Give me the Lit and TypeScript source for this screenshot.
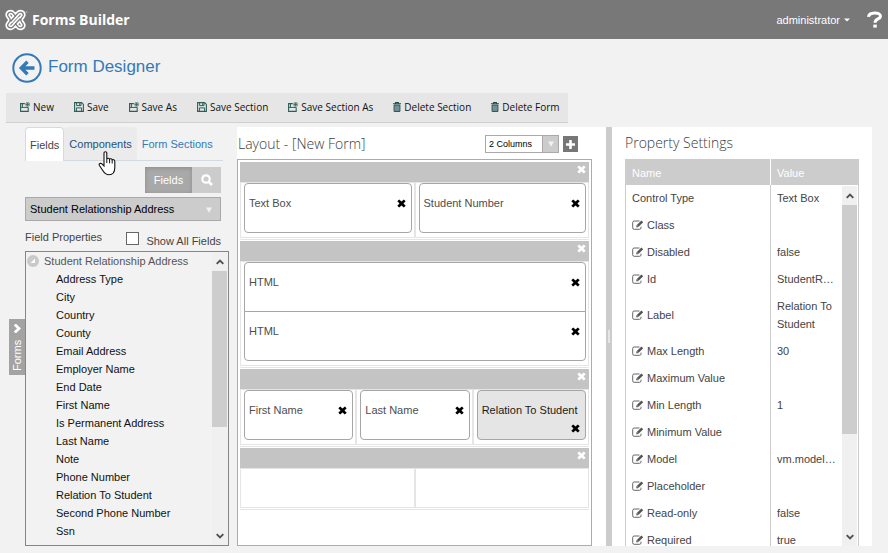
import { LitElement, html, css, nothing } from "lit";
import { customElement, property, state } from "lit/decorators.js";
import { classMap } from "lit/directives/class-map.js";

const FIELDS = [
  "Address Type", "City", "Country", "County", "Email Address", "Employer Name", "End Date",
  "First Name", "Is Permanent Address", "Last Name", "Note", "Phone Number",
  "Relation To Student", "Second Phone Number", "Ssn",
];

const ACTIONS: [string, string][] = [
  ["New", "add"], ["Save", "save"], ["Save As", "add"], ["Save Section", "save"],
  ["Save Section As", "add"], ["Delete Section", "trash"], ["Delete Form", "trash"],
];

interface Prop { name: string; value: string; fixed?: boolean }
const PROPS: Prop[] = [
  { name: "Control Type", value: "Text Box", fixed: true },
  { name: "Class", value: "" },
  { name: "Disabled", value: "false" },
  { name: "Id", value: "StudentR…" },
  { name: "Label", value: "Relation To Student" },
  { name: "Max Length", value: "30" },
  { name: "Maximum Value", value: "" },
  { name: "Min Length", value: "1" },
  { name: "Minimum Value", value: "" },
  { name: "Model", value: "vm.model…" },
  { name: "Placeholder", value: "" },
  { name: "Read-only", value: "false" },
  { name: "Required", value: "true" },
];

/* Each section is a list of cells; each cell a stack of controls. */
const SECTIONS: string[][][] = [
  [["Text Box"], ["Student Number"]],
  [["HTML", "HTML"]],
  [["First Name"], ["Last Name"], ["Relation To Student"]],
  [[], []],
];

const LOGO = "M10.5 7.2 8.2 4.4C6.2 2 2.4 3.200 2.700 6.200 2.900 8 5.200 8.600 5.200 11 5.200 13.400 2.900 14 2.700 15.800 2.400 18.800 6.200 20 8.200 17.600L15 10M10.500 14.800 12.800 17.600C14.800 20 18.600 18.800 18.300 15.800 18.100 14 15.800 13.400 15.800 11 15.800 8.600 18.100 8 18.300 6.200 18.600 3.200 14.800 2 12.800 4.400L6 12";

const cross = html`<svg class="cross" viewBox="0 0 9 9" width="9" height="9" aria-hidden="true">
  <path d="M2.2 0.4 4.5 2.5 6.8 0.4 8.7 2.3 6.5 4.5 8.7 6.7 6.8 8.6 4.5 6.5 2.2 8.6 0.3 6.7 2.5 4.5 0.3 2.3Z" fill="currentColor"/></svg>`;

const down = html`<svg viewBox="0 0 6 6" width="6" height="6" aria-hidden="true"><path d="M0 0.5H6L3 5.8Z" fill="currentColor"/></svg>`;

const edit = html`<svg class="edit" viewBox="0 0 12 10" width="12" height="10" aria-hidden="true">
  <path d="M7.500 1H2.200A1.500 1.500 0 0 0 .7 2.500V7.800A1.500 1.500 0 0 0 2.200 9.300H7.500A1.500 1.500 0 0 0 9 7.800V6.600" fill="none" stroke="#666" stroke-width="1"/>
  <path d="M4.300 7.200V5.400L9.400 .4 11.200 2.200 6.100 7.200Z" fill="#555"/><path d="M5 5.400 6.200 6.600" stroke="#fff" stroke-width=".7"/></svg>`;

const actionIcon = (kind: string) => kind === "trash"
  ? html`<svg viewBox="0 0 8 10" width="8" height="10" aria-hidden="true">
      <path d="M0 1.8H8M2.6 1.4V.5H5.4V1.4" fill="none" stroke="#1d4d47" stroke-width="1.1"/>
      <path d="M1.1 3.1H6.9V9.4H1.1Z" fill="#9aa9ad" stroke="#1d4d47"/><path d="M3 3.5V9M5 3.5V9" stroke="#3a6a78" stroke-width=".8"/></svg>`
  : kind === "save"
  ? html`<svg viewBox="0 0 10 10" width="10" height="10" aria-hidden="true">
      <path d="M.6 .6H7.6L9.4 2.4V9.4H.6Z" fill="none" stroke="#2c5f58" stroke-width="1.1"/>
      <path d="M2.6 .8V3.6H7V.8M2.4 9.2V5.9H7.6V9.2" fill="none" stroke="#2c5f58"/><path d="M5.7 1.2V3" stroke="#2c5f58"/></svg>`
  : html`<svg viewBox="0 0 10 10" width="10" height="10" aria-hidden="true">
      <path d="M4.8 1.6H.6V9.4H8.2V5.6" fill="none" stroke="#2c5f58" stroke-width="1.1"/>
      <path d="M.6 5.4H8.2M2.4 1.8V5" fill="none" stroke="#2c5f58"/>
      <circle cx="7.6" cy="2.4" r="2.1" fill="#a9c0b4" stroke="#5c7f74" stroke-width=".6"/>
      <path d="M7.6 .8V4M6 2.4H9.2" stroke="#2c5f58" stroke-width=".8"/></svg>`;

@customElement("scroll-track")
class ScrollTrack extends LitElement {
  @property({ type: Number }) span = 50;
  static styles = css`
    :host { display: flex; flex-direction: column; width: 15px; background: #f0f0f0; color: #505050; }
    .end { height: 19px; display: grid; place-items: center; flex: none; }
    .rail { flex: 1; display: flex; flex-direction: column; }
    .thumb { background: #cdcdcd; }
  `;
  render() {
    return html`
      <div class="end"><svg width="8" height="6" viewBox="0 0 8 6"><path d="M.7 4.8 4 1.5 7.3 4.8" fill="none" stroke="currentColor" stroke-width="1.9"/></svg></div>
      <div class="rail"><div class="thumb" style="height:${this.span}%"></div></div>
      <div class="end"><svg width="8" height="6" viewBox="0 0 8 6"><path d="M.7 1.2 4 4.5 7.3 1.2" fill="none" stroke="currentColor" stroke-width="1.9"/></svg></div>`;
  }
}

@customElement("form-section")
class FormSection extends LitElement {
  @property({ attribute: false }) cells: string[][] = [];
  @property() selected = "";
  static styles = css`
    :host { display: block; border-bottom: 1px solid #e5e5e5; padding-bottom: 1px; margin-bottom: 1px; }
    button { border: 0; padding: 0; background: none; display: block; line-height: 0; cursor: pointer; color: inherit; }
    .bar { height: 20px; background: #c4c4c4; color: #fff; display: flex; justify-content: flex-end; align-items: flex-start; padding: 3px 3px 0 0; box-sizing: border-box; }
    .row { display: flex; }
    .cell { flex: 1 1 0; min-width: 0; border: 1px solid #e5e5e5; padding: 0 2px 4px 3px; min-height: 34px; }
    .control { height: 50px; box-sizing: border-box; border: 1px solid #a6a6a6; border-radius: 4px; padding: 11px 5px 4px 4px;
      display: flex; flex-wrap: wrap; row-gap: 6px; justify-content: space-between; align-content: flex-start; align-items: center; line-height: 16px; color: #4d4d4d; background: #fff; }
    .control + .control { margin-top: -1px; border-radius: 0 0 4px 4px; }
    .stacked { border-radius: 4px 4px 0 0; }
    .control button { color: #000; }
    .control.selected { background: #e5e5e5; color: #1a1a1a; }
    .selected button { margin-left: auto; }
    .selected span { flex: 0 0 100%; white-space: nowrap; }
  `;
  render() {
    return html`
      <div class="bar"><button aria-label="Remove section">${cross}</button></div>
      <div class="row">${this.cells.map((stack) => html`
        <div class="cell">${stack.map((label, i) => html`
          <div class=${classMap({ control: true, stacked: stack.length > 1 && i === 0, selected: label === this.selected })}>
            <span>${label}</span><button aria-label="Remove ${label}">${cross}</button>
          </div>`)}</div>`)}
      </div>`;
  }
}

@customElement("app-root")
class AppRoot extends LitElement {
  @state() private tab = "Fields";

  static styles = css`
    :host { display: flex; flex-direction: column; height: 100vh; box-sizing: border-box; overflow: hidden; background: #f2f2f2;
      font-family: "Liberation Sans", Arial, sans-serif; font-size: 11px; color: #444; }
    button, select, input { font: inherit; margin: 0; }
    button { border: 0; padding: 0; background: none; color: inherit; cursor: pointer; }
    h1, h2 { margin: 0; font-weight: 400; }
    svg { display: block; flex: none; }
    a { text-decoration: none; color: inherit; }

    header { height: 39px; flex: none; background: #787878; color: #fff; display: flex; align-items: center; padding: 0 4px 0 5px; gap: 4px; }
    .brand { font: 700 14px/20px "Open Sans", sans-serif; flex: 1; }
    .user { display: flex; align-items: center; gap: 4px; margin-right: 12px; }
    .title { display: flex; align-items: center; gap: 6px; padding: 14px 0 10px 12px; color: #337ab7; flex: none; }
    .title h1 { font-size: 17px; line-height: 24px; padding-bottom: 2px; }

    .tools { flex: none; align-self: flex-start; margin-left: 6px; height: 30px; box-sizing: border-box; background: #e6e6e6; border-bottom: 1px solid #d0d0d0;
      display: flex; align-items: center; gap: 20px; padding: 0 8px 1px 14px; font: 10px/16px "Open Sans", sans-serif; color: #111; }
    .tools button { display: flex; align-items: center; gap: 3px; white-space: nowrap; }

    main { flex: 1; min-height: 0; display: flex; margin: 4px 16px 7px 9px; }

    .left { flex: 0 0 228px; display: flex; align-items: flex-start; height: 100%; }
    .rail { flex: none; width: 16px; height: 56px; margin-top: 192px; background: #a3a3a3; color: #fff; writing-mode: vertical-rl; transform: rotate(180deg);
      display: flex; align-items: center; gap: 7px; padding: 4px 0; box-sizing: border-box; line-height: 14px; }
    .fields { flex: 1; min-width: 0; height: 100%; display: flex; flex-direction: column; padding-right: 8px; box-sizing: border-box; }
    .tabs { display: flex; height: 34px; box-sizing: border-box; border-bottom: 1px solid #d3dbe0; margin-right: 6px; position: relative; flex: none; }
    .tabs button { padding: 0 4px; color: #337ab7; border: 1px solid transparent; border-bottom: 0; border-radius: 4px 4px 0 0; height: 33px; white-space: nowrap; }
    .tabs button.on { background: #fff; color: #444; border-color: #d3dbe0; height: 34px; }
    .tabs button.hover { background: #ebebeb; color: #23527c; }
    .hand { position: absolute; left: 73px; top: 24px; }
    .mode { display: flex; align-self: flex-end; margin: 6px 8px 4px 0; height: 26px; flex: none; color: #fff; }
    .mode button { width: 29px; background: #ccc; display: grid; place-items: center; }
    .mode button.on { width: 47px; background: #a9a9a9; box-shadow: inset 0 1px 4px #8c8c8c; }
    .pick { position: relative; margin-right: 8px; flex: none; }
    .pick select, .cols select { appearance: none; width: 100%; box-sizing: border-box; border: 1px solid #a9a9a9; border-radius: 0; padding: 0 4px; }
    .pick select { height: 24px; background: #ccc; color: #000; display: block; }
    .pick svg { position: absolute; right: 9px; top: 10px; color: #f2f2f2; pointer-events: none; }
    .filter { display: flex; justify-content: space-between; padding: 10px 8px 0 0; height: 30px; box-sizing: border-box; flex: none; line-height: 12px; }
    .filter label { display: flex; gap: 7px; padding-top: 4px; }
    .filter input { appearance: none; width: 13px; height: 13px; border: 1px solid #666; background: #fff; margin-top: -3px; }
    .list { flex: 1; min-height: 0; display: flex; border: 1px solid #858585; padding-right: 1px; overflow: hidden; }
    .tree { flex: 1; min-width: 0; line-height: 18px; color: #111; white-space: nowrap; }
    .tree ul { list-style: none; margin: 0; padding: 0 0 0 30px; }
    .root { display: flex; align-items: center; gap: 5px; color: #555; padding-left: 1px; }

    .middle { flex: 1 1 369px; min-width: 0; background: #fff; display: flex; flex-direction: column; }
    .head { height: 32px; flex: none; display: flex; align-items: center; padding: 2px 28px 0 1px; box-sizing: border-box; gap: 4px; }
    h2 { font: 300 14px/20px "Open Sans", sans-serif; color: #3c3c3c; flex: 1; white-space: nowrap; }
    .cols { position: relative; width: 74px; height: 18px; }
    .cols select { height: 18px; background: #fff; font-size: 9px; color: #000; display: block; padding: 0 3px; }
    .cols i { position: absolute; right: 1px; top: 1px; bottom: 1px; width: 16px; background: #ccc; color: #f2f2f2; display: grid; place-items: center; border-left: 1px solid #aaa; box-sizing: border-box; pointer-events: none; }
    .add { width: 15px; height: 16px; background: #777; color: #fff; display: grid; place-items: center; }
    .canvas { flex: 1; min-height: 0; border: 1px solid #acacac; margin-right: 14px; padding: 2px 2px 0; overflow: hidden; }

    .split { flex: 0 0 6px; background: #ccc; display: grid; place-items: center; }
    .split i { width: 2px; height: 13px; background: #e6e6e6; }
    .right { flex: 0 0 260px; background: #fff; display: flex; flex-direction: column; min-height: 0; padding: 0 13px; box-sizing: border-box; }
    .right .head { padding: 0; }
    .grid { position: relative; flex: 1; min-height: 0; overflow: hidden; border: solid #ccc; border-width: 0 1px; }
    table { border-collapse: collapse; width: 100%; table-layout: fixed; line-height: 18px; }
    th { background: #ccc; color: #fff; font-weight: 400; text-align: left; padding: 5px 6px 3px; }
    th:first-child { width: 132px; border-right: 1px solid #fff; }
    td { padding: 4px 16px 5px 6px; }
    td:first-child { border-right: 1px solid #ccc; padding-right: 0; }
    td:first-child > span { display: flex; align-items: center; gap: 3px; }
    .grid scroll-track { position: absolute; right: 1px; top: 27px; bottom: 0; }
  `;

  render() {
    return html`
      <header>
        <svg width="23" height="22" viewBox="0 0 23 22" aria-hidden="true">
          <g fill="none" stroke-linecap="round">
            <path d=${LOGO} stroke="#fff" stroke-width="4.600"/>
            <path d=${LOGO} stroke="#787878" stroke-width="1.300"/>
          </g>
          <circle cx="21.600" cy="3" r=".8" fill="#bbb"/>
        </svg>
        <span class="brand">Forms Builder</span>
        <button class="user">administrator <svg width="6" height="4" viewBox="0 0 6 4"><path d="M0 .5H6L3 3.500Z" fill="#fff"/></svg></button>
        <a href="#help" aria-label="Help"><svg width="18" height="17" viewBox="0 0 18 17"><path d="M2.500 5.800C3 .8 14.800 .8 14.500 5.300 14.300 8.200 9 7.800 9 11.800" fill="none" stroke="#fff" stroke-width="3"/><path d="M7.300 13.600H10.800V16.600H7.300Z" fill="#fff"/></svg></a>
      </header>

      <div class="title">
        <a href="#back" aria-label="Back"><svg width="30" height="30" viewBox="0 0 30 30"><circle cx="15" cy="15" r="13.700" fill="none" stroke="#337ab7" stroke-width="2"/><path d="M22.500 15H10M15.500 8.800 9.300 15 15.500 21.200" fill="none" stroke="#337ab7" stroke-width="3.400"/></svg></a>
        <h1>Form Designer</h1>
      </div>

      <nav class="tools">${ACTIONS.map(([label, kind]) => html`<button>${actionIcon(kind)}${label}</button>`)}</nav>

      <main>
        <section class="left">
          <button class="rail">Forms
            <svg width="10" height="9" viewBox="0 0 10 9"><path d="M7.200 .5 3 4.500 7.200 8.500" fill="none" stroke="#fff" stroke-width="2.800"/></svg>
          </button>
          <div class="fields">
            <div class="tabs" role="tablist">
              ${["Fields", "Components", "Form Sections"].map((t) => html`
                <button role="tab" class=${classMap({ on: this.tab === t, hover: t === "Components" && this.tab !== t })} @click=${() => (this.tab = t)}>${t}</button>`)}
              <svg class="hand" width="18" height="25" viewBox="0 0 18 25" aria-hidden="true">
                <path d="M6 1.800C6 .4 8.800 .4 8.800 1.800V8C9.200 6.900 11.400 7 11.600 8.300 12 7.400 14 7.600 14.200 9 14.800 8.300 16.800 8.600 16.800 10.200V16.500C16.800 21 14.800 23.800 11 23.800 7.600 23.800 6.200 22 4.600 19.300L1.300 14.300C.5 12.800 2.600 11.700 3.900 12.900L6 15Z" fill="#fff" stroke="#111" stroke-width="1.100"/>
                <path d="M8.800 8V12M11.600 8.500V12.300M14.200 9.300V12.500" stroke="#111" fill="none"/>
              </svg>
            </div>
            <div class="mode">
              <button class="on">Fields</button>
              <button aria-label="Search"><svg width="12" height="12" viewBox="0 0 12 12"><circle cx="5" cy="5" r="3.700" fill="none" stroke="#fff" stroke-width="2.200"/><path d="M7.600 7.600 11 11" stroke="#fff" stroke-width="2.500"/></svg></button>
            </div>
            <div class="pick"><select aria-label="Entity"><option>Student Relationship Address</option></select>${down}</div>
            <div class="filter"><span>Field Properties</span><label><input type="checkbox"><span>Show All Fields</span></label></div>
            <div class="list">
              <div class="tree">
                <div class="root"><svg width="12" height="12" viewBox="0 0 12 12"><circle cx="6" cy="6" r="6" fill="#c9c9c9"/><path d="M8 3.500V8H3.500Z" fill="#fff"/></svg>Student Relationship Address</div>
                <ul>${FIELDS.map((f) => html`<li>${f}</li>`)}</ul>
              </div>
              <scroll-track .span=${61}></scroll-track>
            </div>
          </div>
        </section>

        <section class="middle">
          <div class="head">
            <h2>Layout - [New Form]</h2>
            <div class="cols"><select aria-label="Columns"><option>2 Columns</option></select><i>${down}</i></div>
            <button class="add" aria-label="Add section"><svg width="9" height="9" viewBox="0 0 9 9"><path d="M4.500 0V9M0 4.500H9" stroke="#fff" stroke-width="2.600"/></svg></button>
          </div>
          <div class="canvas">${SECTIONS.map((s) => html`<form-section .cells=${s} selected="Relation To Student"></form-section>`)}</div>
        </section>

        <div class="split"><i></i></div>

        <section class="right">
          <div class="head"><h2>Property Settings</h2></div>
          <div class="grid">
            <table>
              <thead><tr><th>Name</th><th>Value</th></tr></thead>
              <tbody>${PROPS.map((p) => html`<tr><td><span>${p.fixed ? nothing : edit}${p.name}</span></td><td>${p.value}</td></tr>`)}</tbody>
            </table>
            <scroll-track .span=${71}></scroll-track>
          </div>
        </section>
      </main>`;
  }
}
